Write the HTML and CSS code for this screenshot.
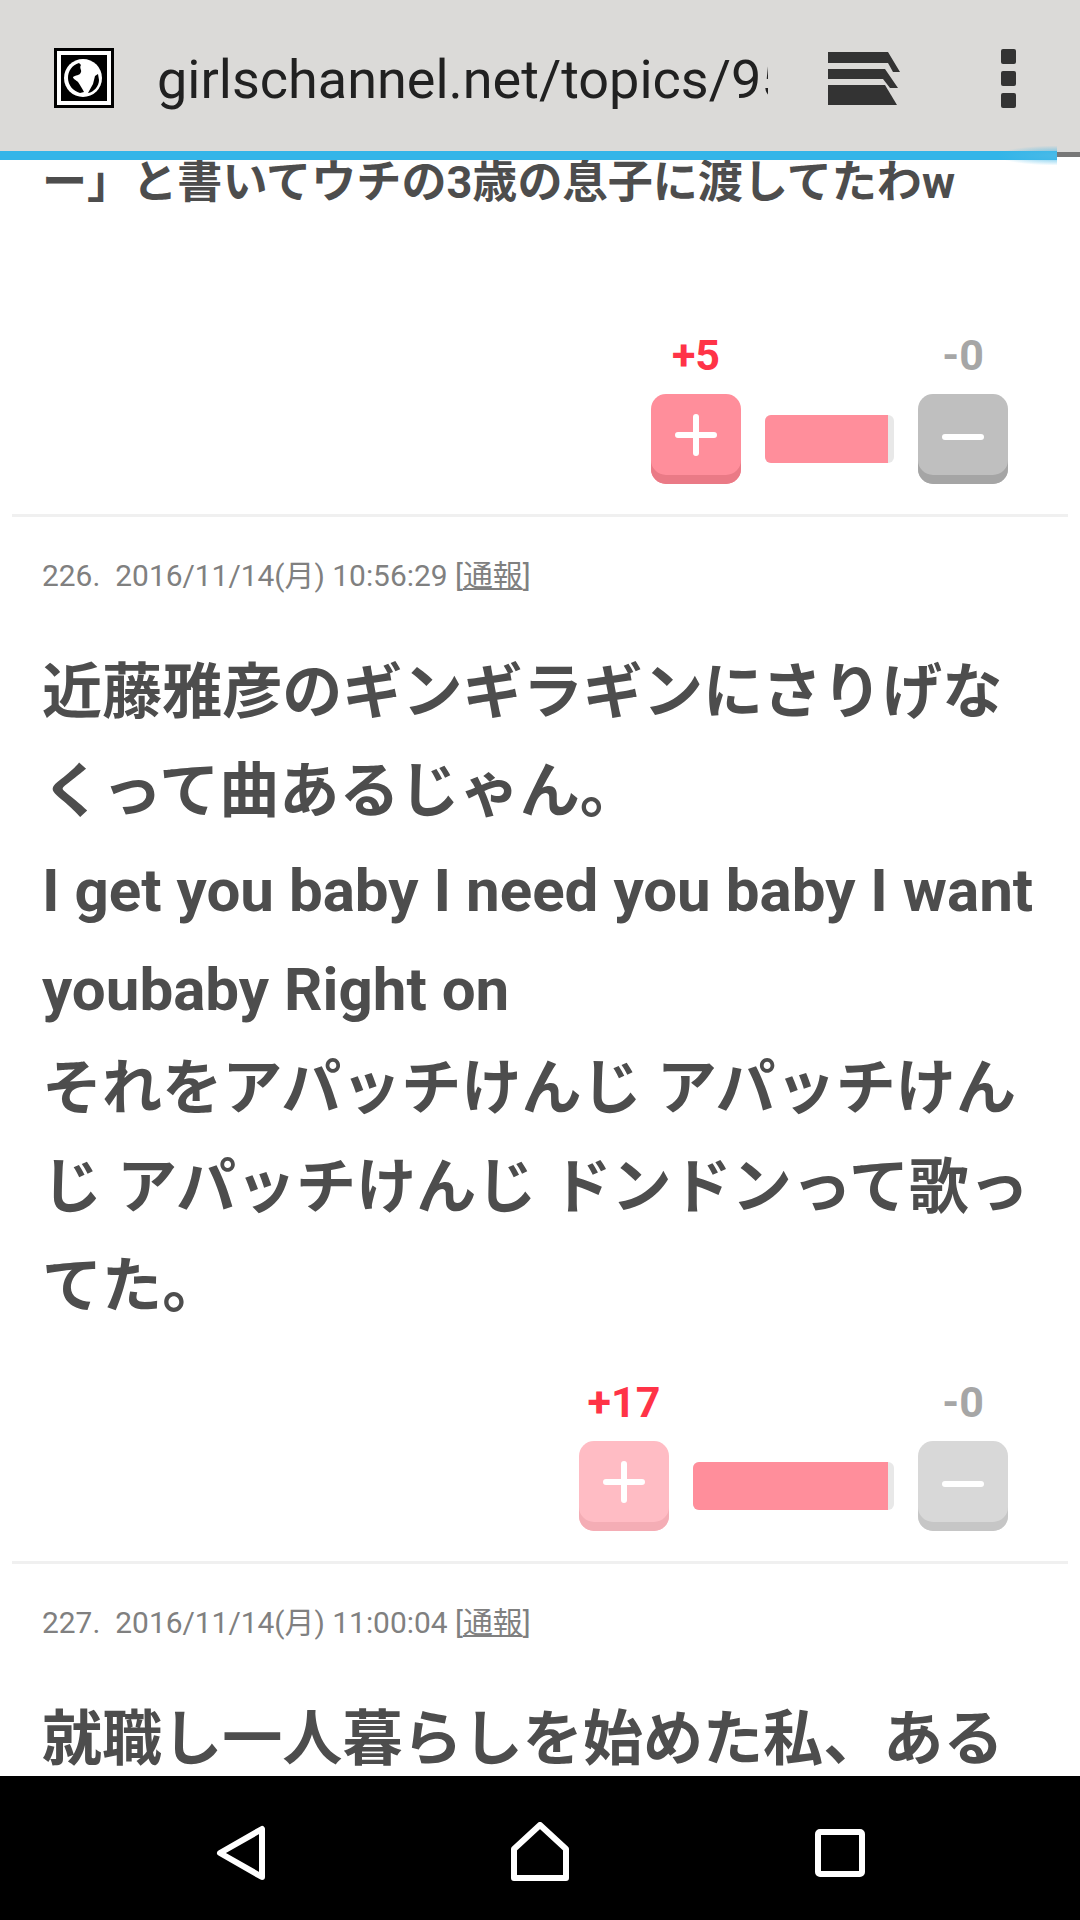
FILE: index.html
```html
<!DOCTYPE html>
<html lang="ja">
<head>
  <meta charset="UTF-8">
  <title>girlschannel.net</title>
  <link rel="stylesheet" href="styles.css">
</head>
<body>
  <header class="toolbar">
    <div class="toolbar-row">
      <svg class="site-icon" width="60" height="60" viewBox="0 0 60 60">
        <rect width="60" height="60" fill="#000"/>
        <rect x="3" y="3" width="54" height="54" fill="#fff"/>
        <rect x="7" y="7" width="46" height="46" fill="#000"/>
        <circle cx="29" cy="30" r="19" fill="#fff"/>
        <path d="M25 15C18 17 14 23 14 30C14 37 19 43 26 45L30 44C28 40 26 37 24 34C22 32 19 31 19 29C21 27 26 28 27 24C28 22 25 20 27 17Z" fill="#000"/>
        <path d="M44 26L41 28L39 36L34 45C40 44 45 38 45 32Z" fill="#000"/>
      </svg>
      <div class="url">girlschannel.net/topics/95</div>
      <svg class="tabs-icon" width="72" height="53" viewBox="0 0 72 53">
        <path d="M0 0H60L72 20H65L60 11H0Z" fill="#333"/>
        <path d="M0 17H57L70 36H62L55 27H0Z" fill="#333"/>
        <path d="M0 33H57L69 53H0Z" fill="#333"/>
      </svg>
      <div class="menu-dots"><span></span><span></span><span></span></div>
    </div>
    <div class="progress"><div class="progress-fill"></div></div>
    <div class="progress-glow"></div>
  </header>

  <main class="feed">
    <article class="comment comment-first">
      <p class="body body-small">ー」と書いてウチの3歳の息子に渡してたわw<br><br></p>
      <div class="votes">
        <div class="vote">
          <span class="count count-plus">+5</span>
          <div class="btn btn-plus">
            <svg width="42" height="42" viewBox="0 0 42 42"><path d="M3 21H39M21 3V39" stroke="#fff" stroke-width="6" stroke-linecap="round"/></svg>
          </div>
        </div>
        <div class="bar" style="width: 129px"><div class="bar-fill"></div></div>
        <div class="vote">
          <span class="count count-minus">-0</span>
          <div class="btn btn-minus">
            <svg width="42" height="6" viewBox="0 0 42 6"><path d="M3 3H39" stroke="#fff" stroke-width="6" stroke-linecap="round"/></svg>
          </div>
        </div>
      </div>
    </article>

    <article class="comment">
      <div class="meta">226.<span class="meta-date">2016/11/14(月) 10:56:29</span> [<a class="report">通報</a>]</div>
      <p class="body">近藤雅彦のギンギラギンにさりげなくって曲あるじゃん。<br>I get you baby I need you baby I want youbaby Right on<br>それをアパッチけんじ アパッチけんじ アパッチけんじ ドンドンって歌ってた。</p>
      <div class="votes">
        <div class="vote">
          <span class="count count-plus">+17</span>
          <div class="btn btn-plus faded">
            <svg width="42" height="42" viewBox="0 0 42 42"><path d="M3 21H39M21 3V39" stroke="#fff" stroke-width="6" stroke-linecap="round"/></svg>
          </div>
        </div>
        <div class="bar" style="width: 201px"><div class="bar-fill"></div></div>
        <div class="vote">
          <span class="count count-minus">-0</span>
          <div class="btn btn-minus faded">
            <svg width="42" height="6" viewBox="0 0 42 6"><path d="M3 3H39" stroke="#fff" stroke-width="6" stroke-linecap="round"/></svg>
          </div>
        </div>
      </div>
    </article>

    <article class="comment">
      <div class="meta">227.<span class="meta-date">2016/11/14(月) 11:00:04</span> [<a class="report">通報</a>]</div>
      <p class="body">就職し一人暮らしを始めた私、ある</p>
    </article>
  </main>

  <nav class="navbar">
    <svg width="50" height="56" viewBox="0 0 50 56"><path d="M46 4V52L4 28Z" fill="none" stroke="#fff" stroke-width="6" stroke-linejoin="round"/></svg>
    <svg class="nav-home" width="58" height="59" viewBox="0 0 58 59"><path d="M29 3L55 27V56H3V27Z" fill="none" stroke="#fff" stroke-width="6" stroke-linejoin="round"/></svg>
    <svg width="50" height="48" viewBox="0 0 50 48"><rect x="3" y="3" width="44" height="42" rx="2" fill="none" stroke="#fff" stroke-width="6"/></svg>
  </nav>
</body>
</html>
```

FILE: styles.css
```css
* {
  box-sizing: border-box;
}

body {
  margin: 0;
  width: 1080px;
  height: 1920px;
  display: flex;
  flex-direction: column;
  overflow: hidden;
  background-color: #fff;
  font-family: Roboto, "Noto Sans CJK JP", sans-serif;
}

/* browser toolbar */
.toolbar {
  position: relative;
  z-index: 2;
  flex: none;
}

.toolbar-row {
  height: 151px;
  display: flex;
  align-items: center;
  padding: 5px 64px 0 54px;
  background-color: #dbdad8;
}

.site-icon {
  flex: none;
}

.url {
  width: 611px;
  margin: 4px 0 0 43px;
  overflow: hidden;
  white-space: nowrap;
  font-size: 54px;
  line-height: 64px;
  color: #212121;
}

.tabs-icon {
  flex: none;
  margin-left: 60px;
}

.menu-dots {
  display: flex;
  flex-direction: column;
  gap: 7px;
  margin-left: auto;
}

.menu-dots span {
  display: block;
  width: 15px;
  height: 15px;
  border-radius: 2px;
  background-color: #333;
}

.progress {
  height: 9px;
  background: linear-gradient(to bottom, #dbdad8 1px, #777 1px, #777 6px, #fff 6px);
}

.progress-fill {
  width: 1057px;
  height: 9px;
  background-color: #33b5e8;
}

.progress-glow {
  position: absolute;
  left: 997px;
  top: 146px;
  width: 60px;
  height: 19px;
  background: radial-gradient(ellipse 60px 10px at 100% 50%, rgba(74, 186, 232, 0.95), rgba(74, 186, 232, 0));
}

/* comments */
.feed {
  flex: 1;
  min-height: 0;
  overflow: hidden;
  margin-top: -14px;
}

.comment {
  margin: 0 12px;
  padding: 39px 30px 30px;
  border-bottom: 3px solid #f0f0f0;
}

.comment-first {
  padding-top: 0;
}

.comment-first .votes {
  margin-top: 37px;
}

.meta {
  font-size: 29.9px;
  line-height: 40px;
  color: #808080;
}

.meta-date {
  margin-left: 15px;
}

.report {
  text-decoration: underline;
}

.body {
  margin: 47px 0 0;
  font-size: 60.1px;
  line-height: 99px;
  font-weight: 700;
  color: #4d4d4d;
}

.body-small {
  margin-top: 0;
  font-size: 45.1px;
  line-height: 74px;
}

.votes {
  display: flex;
  justify-content: flex-end;
  align-items: flex-end;
  gap: 24px;
  margin-top: 42px;
  padding-right: 30px;
}

.vote {
  display: flex;
  flex-direction: column;
  align-items: center;
  gap: 15px;
  width: 90px;
}

.count {
  font-size: 43px;
  line-height: 48px;
  font-weight: 700;
}

.count-plus {
  color: #ff3347;
}

.count-minus {
  color: #a6a6a6;
}

.btn {
  width: 90px;
  height: 90px;
  display: flex;
  align-items: center;
  justify-content: center;
  padding-bottom: 9px;
  border-radius: 15px;
}

.btn-plus {
  background-color: #ff8e9b;
  box-shadow: inset 0 -9px 0 #ea7a86;
}

.btn-plus.faded {
  background-color: #ffbcc4;
  box-shadow: inset 0 -9px 0 #f4adb5;
}

.btn-minus {
  background-color: #bfbfbf;
  box-shadow: inset 0 -9px 0 #a5a5a5;
}

.btn-minus.faded {
  background-color: #d8d8d8;
  box-shadow: inset 0 -9px 0 #c6c6c6;
}

.btn-minus svg {
  margin-top: 4px;
}

.bar {
  height: 48px;
  margin-bottom: 21px;
  border-radius: 6px;
  overflow: hidden;
  background-color: #e8e8e8;
}

.bar-fill {
  height: 100%;
  width: calc(100% - 6px);
  background-color: #ff8e9b;
}

/* android nav */
.navbar {
  position: relative;
  z-index: 2;
  flex: none;
  height: 144px;
  display: flex;
  align-items: center;
  justify-content: space-between;
  padding: 10px 215px 0 216px;
  background-color: #000;
}

.nav-home {
  margin: -3px 2px 0 0;
}
```
